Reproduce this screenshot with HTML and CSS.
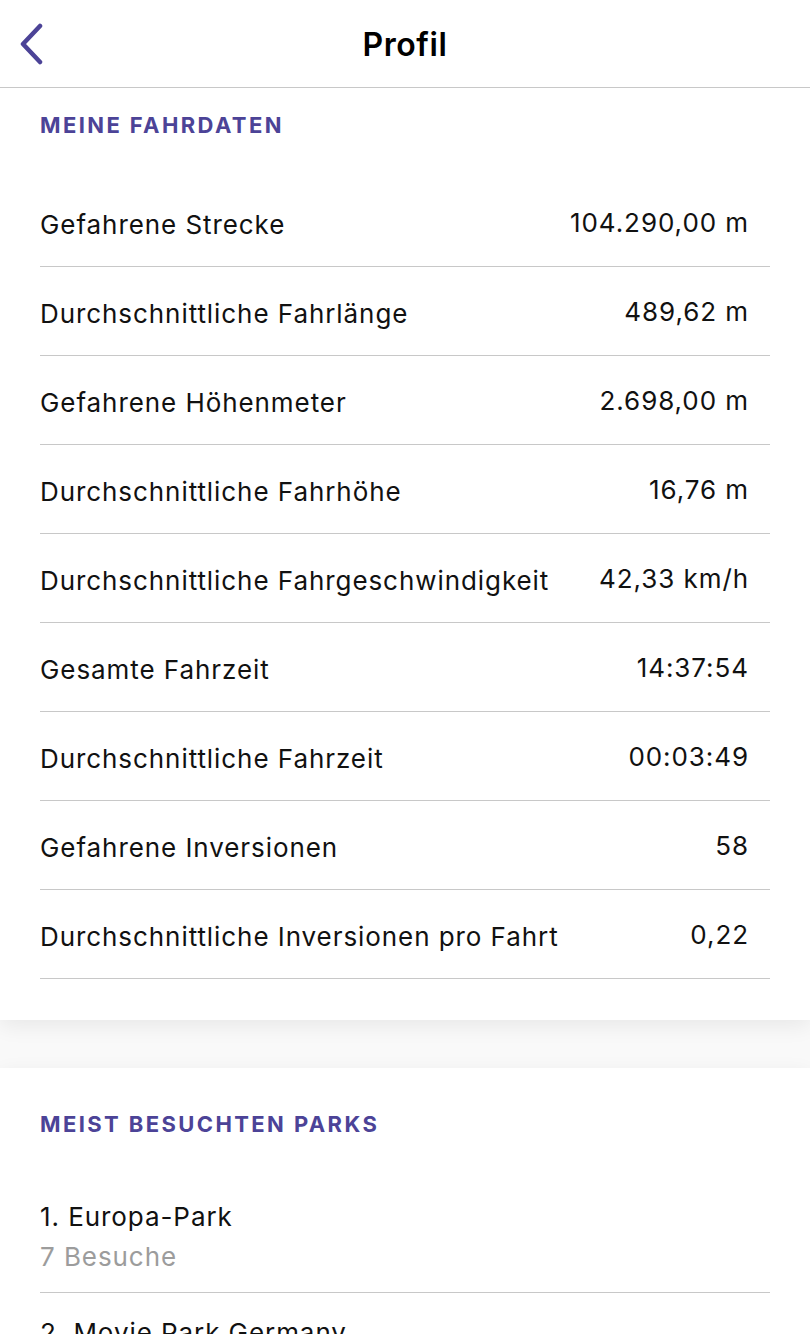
FILE: index.html
```html
<!DOCTYPE html>
<html lang="de">
<head>
<meta charset="utf-8">
<title>Profil</title>
<link rel="stylesheet" href="styles.css">
</head>
<body>
<header class="navbar">
  <button class="back" aria-label="Zurück">
    <svg width="26" height="42" viewBox="0 0 26 42"><path d="M22 3 L5 21 L22 39" fill="none" stroke="#4c4397" stroke-width="4.5" stroke-linecap="round" stroke-linejoin="round"/></svg>
  </button>
  <h1 class="title">Profil</h1>
</header>
<main class="content">
  <section class="card first">
    <h2 class="section-title">MEINE FAHRDATEN</h2>
    <ul class="list">
      <li class="row"><span class="label">Gefahrene Strecke</span><span class="value">104.290,00 m</span></li>
      <li class="row"><span class="label">Durchschnittliche Fahrlänge</span><span class="value">489,62 m</span></li>
      <li class="row"><span class="label">Gefahrene Höhenmeter</span><span class="value">2.698,00 m</span></li>
      <li class="row"><span class="label">Durchschnittliche Fahrhöhe</span><span class="value">16,76 m</span></li>
      <li class="row"><span class="label">Durchschnittliche Fahrgeschwindigkeit</span><span class="value">42,33 km/h</span></li>
      <li class="row"><span class="label">Gesamte Fahrzeit</span><span class="value">14:37:54</span></li>
      <li class="row"><span class="label">Durchschnittliche Fahrzeit</span><span class="value">00:03:49</span></li>
      <li class="row"><span class="label">Gefahrene Inversionen</span><span class="value">58</span></li>
      <li class="row"><span class="label">Durchschnittliche Inversionen pro Fahrt</span><span class="value">0,22</span></li>
    </ul>
  </section>
  <section class="card second">
    <h2 class="section-title">MEIST BESUCHTEN PARKS</h2>
    <ul class="list">
      <li class="park"><span class="park-name">1. Europa-Park</span><span class="park-sub">7 Besuche</span></li>
      <li class="park"><span class="park-name">2. Movie Park Germany</span><span class="park-sub">3 Besuche</span></li>
    </ul>
  </section>
</main>
</body>
</html>
```

FILE: styles.css
```css
* { box-sizing: border-box; }
html, body { margin: 0; padding: 0; }
body {
  font-family: Inter, "Noto Sans", Roboto, sans-serif;
  color: #111;
  background: #f9f9f9;
  width: 810px;
  height: 1334px;
  overflow: hidden;
}
.navbar {
  height: 88px;
  background: #fff;
  border-bottom: 1px solid #c8c8c8;
  display: flex;
  align-items: center;
  justify-content: center;
  position: relative;
}
.back {
  position: absolute;
  left: 18px;
  top: 23px;
  background: none;
  border: 0;
  padding: 0;
  width: 26px;
  height: 42px;
}
.back svg { display: block; }
.title {
  margin: 0;
  font-size: 32px;
  font-weight: 600;
  letter-spacing: 0.6px;
  color: #000;
  line-height: 1;
  padding-top: 2px;
}
.content {
  display: flex;
  flex-direction: column;
  gap: 48px;
}
.card {
  background: #fff;
  padding: 0 40px 41px 40px;
  box-shadow: 0 6px 20px rgba(0,0,0,0.07);
}
.card.second { padding-top: 19px; }
.section-title {
  margin: 0;
  height: 90px;
  padding-top: 26px;
  font-size: 22px;
  line-height: 22px;
  font-weight: 700;
  letter-spacing: 2.4px;
  color: #4c4397;
}
.list { list-style: none; margin: 0; padding: 0; }
.row {
  height: 89px;
  border-bottom: 1.5px solid #c8c8c8;
  display: flex;
  align-items: center;
  justify-content: space-between;
  padding-right: 21px;
  padding-top: 4px;
  font-size: 26px;
  letter-spacing: 0.93px;
}
.value { position: relative; top: -2px; }
.park {
  border-bottom: 1.5px solid #c8c8c8;
  display: flex;
  flex-direction: column;
  padding: 20px 0 15px;
  font-size: 26px;
  letter-spacing: 0.93px;
  line-height: 40px;
}
.park-sub { color: #9c9c9c; }
```
